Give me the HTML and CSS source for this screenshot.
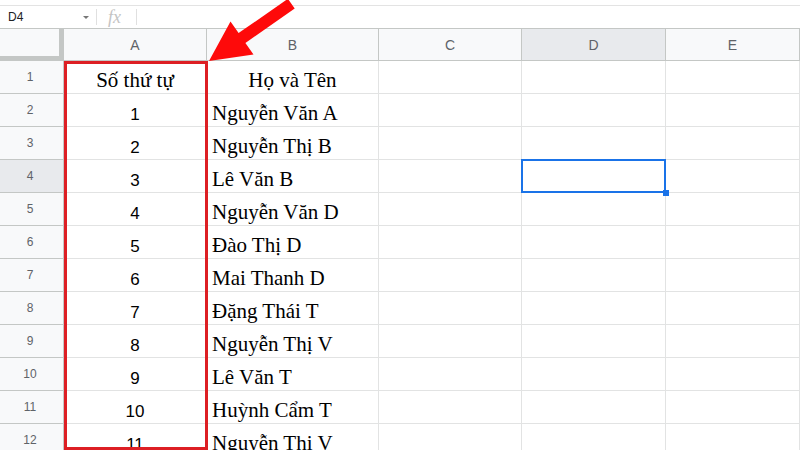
FILE: index.html
```html
<!DOCTYPE html>
<html>
<head>
<meta charset="utf-8">
<link rel="stylesheet" href="styles.css">
</head>
<body>
<div class="page">
  <div class="topstrip"></div>
  <div class="fbar">
    <div class="namebox"><span class="ref">D4</span><span class="caret"></span></div>
    <div class="fx">fx</div>
    <div class="finput"></div>
  </div>
  <div class="grid">
    <div class="corner"></div>
    <div class="ch">A</div><div class="ch">B</div><div class="ch">C</div><div class="ch on">D</div><div class="ch">E</div>

    <div class="rh">1</div><div class="c ser mid">Số thứ tự</div><div class="c ser mid">Họ và Tên</div><div class="c"></div><div class="c"></div><div class="c"></div>
    <div class="rh">2</div><div class="c num">1</div><div class="c ser">Nguyễn Văn A</div><div class="c"></div><div class="c"></div><div class="c"></div>
    <div class="rh">3</div><div class="c num">2</div><div class="c ser">Nguyễn Thị B</div><div class="c"></div><div class="c"></div><div class="c"></div>
    <div class="rh on">4</div><div class="c num">3</div><div class="c ser">Lê Văn B</div><div class="c"></div><div class="c sel"></div><div class="c"></div>
    <div class="rh">5</div><div class="c num">4</div><div class="c ser">Nguyễn Văn D</div><div class="c"></div><div class="c"></div><div class="c"></div>
    <div class="rh">6</div><div class="c num">5</div><div class="c ser">Đào Thị D</div><div class="c"></div><div class="c"></div><div class="c"></div>
    <div class="rh">7</div><div class="c num">6</div><div class="c ser">Mai Thanh D</div><div class="c"></div><div class="c"></div><div class="c"></div>
    <div class="rh">8</div><div class="c num">7</div><div class="c ser">Đặng Thái T</div><div class="c"></div><div class="c"></div><div class="c"></div>
    <div class="rh">9</div><div class="c num">8</div><div class="c ser">Nguyễn Thị V</div><div class="c"></div><div class="c"></div><div class="c"></div>
    <div class="rh">10</div><div class="c num">9</div><div class="c ser">Lê Văn T</div><div class="c"></div><div class="c"></div><div class="c"></div>
    <div class="rh">11</div><div class="c num">10</div><div class="c ser">Huỳnh Cẩm T</div><div class="c"></div><div class="c"></div><div class="c"></div>
    <div class="rh">12</div><div class="c num">11</div><div class="c ser">Nguyễn Thị V</div><div class="c"></div><div class="c"></div><div class="c"></div>
  </div>
  <div class="redbox"></div>
  <svg class="arrow" width="800" height="450" viewBox="0 0 800 450">
    <polygon points="209,61 230.5,21.5 238.6,33.1 287.9,-1.2 294.7,8.6 245.4,42.9 253.5,54.5" fill="#fe0a0a"/>
  </svg>
</div>
</body>
</html>
```
FILE: styles.css
```css
html, body {
  margin: 0;
  padding: 0;
  background: #fff;
}
.page {
  position: relative;
  width: 800px;
  height: 450px;
  overflow: hidden;
  font-family: "Liberation Sans", Arial, sans-serif;
}
.topstrip {
  height: 5px;
  border-bottom: 1px solid #e3e3e3;
}
.fbar {
  height: 23px;
  box-sizing: border-box;
  border-bottom: 1px solid #c4c7c5;
  display: flex;
  align-items: center;
}
.namebox {
  width: 97px;
  height: 16px;
  box-sizing: border-box;
  border-right: 1px solid #e0e0e0;
  display: flex;
  align-items: center;
  padding-left: 8px;
  padding-right: 7px;
}
.ref {
  flex: 1;
  font-size: 12px;
  color: #202124;
}
.caret {
  width: 0;
  height: 0;
  border-left: 3px solid transparent;
  border-right: 3px solid transparent;
  border-top: 3px solid #777;
}
.fx {
  width: 40px;
  height: 16px;
  box-sizing: border-box;
  border-right: 1px solid #e0e0e0;
  font-family: "Liberation Serif", serif;
  font-style: italic;
  font-size: 18px;
  line-height: 16px;
  color: #c4c4c4;
  padding-left: 11px;
}
.finput {
  flex: 1;
}
.grid {
  display: grid;
  grid-template-columns: 64px 143px 172px 143px 144px 134px;
  grid-template-rows: 32px repeat(12, 33px);
}
.grid > div {
  box-sizing: border-box;
}
.corner {
  background: #f8f9fa;
  border-right: 5px solid #c4c7c5;
  border-bottom: 5px solid #c4c7c5;
}
.ch {
  background: #f8f9fa;
  border-right: 1px solid #c4c7c5;
  border-bottom: 1px solid #c4c7c5;
  display: flex;
  align-items: center;
  justify-content: center;
  font-size: 14px;
  color: #5f6368;
}
.rh {
  background: #f8f9fa;
  border-right: 1px solid #c4c7c5;
  border-bottom: 1px solid #c4c7c5;
  display: flex;
  align-items: center;
  justify-content: center;
  font-size: 12px;
  color: #5f6368;
  padding-right: 3px;
}
.ch.on, .rh.on {
  background: #e8eaed;
}
.c {
  border-right: 1px solid #e2e3e3;
  border-bottom: 1px solid #e2e3e3;
  display: flex;
  align-items: flex-end;
  white-space: nowrap;
  color: #000;
}
.ser {
  font-family: "Liberation Serif", "Times New Roman", serif;
  font-size: 21px;
  line-height: 24px;
  padding-left: 5px;
  padding-bottom: 1px;
}
.mid {
  justify-content: center;
  padding-left: 0;
}
.num {
  justify-content: center;
  font-size: 17px;
  line-height: 20px;
  padding-bottom: 1px;
}
.sel {
  position: relative;
}
.sel::after {
  content: "";
  position: absolute;
  left: -1px;
  top: -1px;
  right: -1px;
  bottom: -1px;
  border: 2px solid #1a73e8;
}
.sel::before {
  content: "";
  position: absolute;
  right: -4px;
  bottom: -4px;
  width: 6px;
  height: 6px;
  background: #1a73e8;
  z-index: 2;
}
.redbox {
  position: absolute;
  left: 64px;
  top: 61px;
  width: 144px;
  height: 389px;
  box-sizing: border-box;
  border: 3px solid #dd1f24;
}
.arrow {
  position: absolute;
  left: 0;
  top: 0;
}
```
